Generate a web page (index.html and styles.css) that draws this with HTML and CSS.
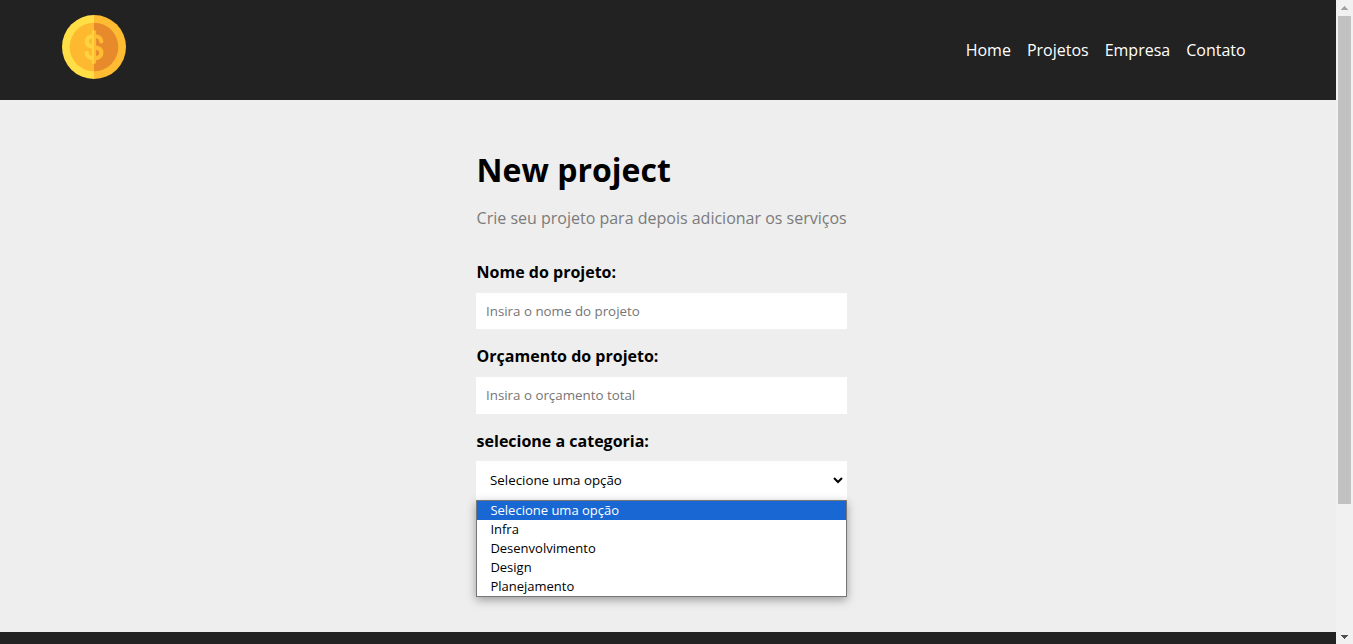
FILE: index.html
```html
<!DOCTYPE html>
<html lang="pt-BR">
<head>
<meta charset="utf-8">
<title>Costs</title>
<link rel="stylesheet" href="styles.css">
</head>
<body>
<div class="window">
  <div class="page">
    <header class="navbar">
      <svg class="logo" width="64" height="64" viewBox="0 0 64 64" aria-label="Costs">
        <defs>
          <linearGradient id="sign" gradientUnits="userSpaceOnUse" x1="0" y1="0" x2="64" y2="0">
            <stop offset=".5" stop-color="#ffd43f"/>
            <stop offset=".5" stop-color="#ffbc33"/>
          </linearGradient>
        </defs>
        <path d="M32 0a32 32 0 0 0 0 64z" fill="#ffde46"/>
        <path d="M32 0a32 32 0 0 1 0 64z" fill="#ffbc33"/>
        <path d="M32 7.700a24.300 24.300 0 0 0 0 48.600z" fill="#ffb930"/>
        <path d="M32 7.700a24.300 24.300 0 0 1 0 48.600z" fill="#e68a2c"/>
        <path d="M32 17V47M39.300 26.400c-.3-3.400-3.200-5.400-7.300-5.400s-7.300 2.200-7.300 5.500c0 3.800 3 5 7.300 5.600s7.400 1.900 7.400 5.600c0 3.400-3.200 5.600-7.400 5.600s-7.300-2-7.300-5.400" fill="none" stroke="url(#sign)" stroke-width="4.200" stroke-linecap="round"/>
      </svg>
      <nav class="menu"><a>Home</a><a>Projetos</a><a>Empresa</a><a>Contato</a></nav>
    </header>
    <main class="content">
      <div class="project">
        <h1>New project</h1>
        <p class="intro">Crie seu projeto para depois adicionar os serviços</p>
        <form>
          <div class="field">
            <label for="name">Nome do projeto:</label>
            <input id="name" type="text" placeholder="Insira o nome do projeto">
          </div>
          <div class="field field-budget">
            <label for="budget">Orçamento do projeto:</label>
            <input id="budget" type="text" placeholder="Insira o orçamento total">
          </div>
          <div class="field field-category">
            <label>selecione a categoria:</label>
            <div class="select">
              <span>Selecione uma opção</span>
              <svg width="10" height="7" viewBox="0 0 10 7"><path d="M1 1l4 4 4-4" fill="none" stroke="#000" stroke-width="2"/></svg>
              <ul class="options">
                <li class="selected">Selecione uma opção</li>
                <li>Infra</li>
                <li>Desenvolvimento</li>
                <li>Design</li>
                <li>Planejamento</li>
              </ul>
            </div>
          </div>
        </form>
      </div>
    </main>
    <footer class="footer"></footer>
  </div>
  <div class="scrollbar">
    <svg width="17" height="16" viewBox="0 0 17 16" shape-rendering="crispEdges"><path d="M8 6h1v1h1v1h1v1h1v1H5V9h1V8h1V7h1z" fill="#a3a3a3"/></svg>
    <div class="thumb"></div>
    <svg class="down" width="17" height="17" viewBox="0 0 17 17" shape-rendering="crispEdges"><path d="M5 8h7v1h-1v1h-1v1H9v1H8v-1H7v-1H6V9H5z" fill="#505050"/></svg>
  </div>
</div>
</body>
</html>
```

FILE: styles.css
```css
* {
  box-sizing: border-box;
  margin: 0;
  padding: 0;
  font-family: "Open Sans", sans-serif;
}

body {
  overflow: hidden;
  background: #eee;
}

.window {
  display: flex;
  height: 644px;
}

.page {
  flex: 1;
  display: flex;
  flex-direction: column;
}

.navbar {
  height: 100px;
  display: flex;
  justify-content: space-between;
  padding: 15px 90.4px 0 62px;
  background: #222;
}

.menu {
  display: flex;
  gap: 16px;
  padding-top: 24px;
  font-size: 16px;
  line-height: 22px;
  color: #fff;
}

.content {
  height: 532px;
  display: flex;
  justify-content: center;
  padding: 48px 13px 0 0;
}

.project {
  width: 371px;
}

h1 {
  font-size: 32px;
  line-height: 44px;
  padding-left: 0.6px;
}

.intro {
  margin-top: 15px;
  padding-left: 0.6px;
  line-height: 22px;
  color: #7b7b7b;
  white-space: nowrap;
}

.field {
  display: flex;
  flex-direction: column;
  height: 84px;
}

form {
  padding-top: 32px;
}

label {
  font-weight: 700;
  font-size: 16px;
  line-height: 22px;
  margin-bottom: 10px;
  padding-left: 0.6px;
}

input {
  width: 371px;
  height: 36px;
  border: 0;
  border-radius: 0;
  padding: 0 10px;
  font-size: 13.333px;
  background: #fff;
}

input::placeholder {
  color: #757575;
}

.field-budget {
  height: 85px;
}

.field-budget input {
  height: 37px;
  padding-bottom: 1px;
}

.field-category label {
  margin-bottom: 9px;
}

.select {
  position: relative;
  display: flex;
  justify-content: space-between;
  align-items: center;
  height: 39px;
  padding: 0 4px 0 14px;
  font-size: 13.333px;
  background: #fff;
}

.select span {
  padding-bottom: 2px;
}

.options {
  position: absolute;
  top: 39px;
  left: 0;
  width: 371px;
  height: 97px;
  border: 1px solid #767676;
  background: #fff;
  box-shadow: 0 3px 9px rgba(0, 0, 0, 0.35);
  list-style: none;
  font-size: 13px;
}

.options li {
  height: 19px;
  line-height: 19px;
  padding-left: 13.4px;
}

.options .selected {
  background: #1967d2;
  color: #fff;
}

.footer {
  height: 12px;
  background: #222;
}

.scrollbar {
  width: 17px;
  display: flex;
  flex-direction: column;
  align-items: center;
  background: #f1f1f1;
}

.thumb {
  width: 13px;
  height: 488px;
  background: #c1c1c1;
}

.down {
  margin-top: auto;
}
```
